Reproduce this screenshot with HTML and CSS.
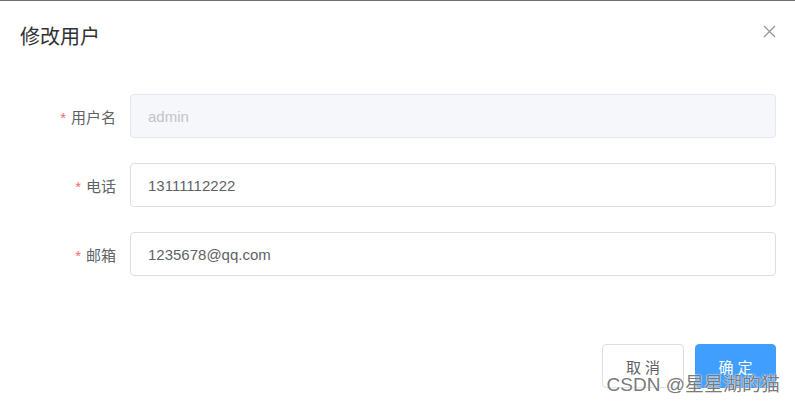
FILE: index.html
```html
<!DOCTYPE html>
<html lang="zh">
<head>
<meta charset="utf-8">
<link rel="stylesheet" href="styles.css">
</head>
<body>
<div class="dialog">
  <div class="header">
    <span class="title">修改用户</span>
    <button class="close" aria-label="close">
      <svg width="13" height="13" viewBox="0 0 13 13"><path d="M1 1L12 12M12 1L1 12" stroke="#909399" stroke-width="1.2" fill="none"/></svg>
    </button>
  </div>
  <div class="body">
    <div class="row">
      <label class="label"><span class="star">*</span>用户名</label>
      <div class="input disabled">admin</div>
    </div>
    <div class="row">
      <label class="label"><span class="star">*</span>电话</label>
      <div class="input">13111112222</div>
    </div>
    <div class="row">
      <label class="label"><span class="star">*</span>邮箱</label>
      <div class="input">1235678@qq.com</div>
    </div>
  </div>
  <div class="footer">
    <button class="btn">取 消</button>
    <button class="btn primary">确 定</button>
  </div>
  <div class="watermark">CSDN @星星湖的猫</div>
</div>
</body>
</html>
```
FILE: styles.css
```css
html, body {
  margin: 0;
  padding: 0;
  background: #fff;
}
body {
  font-family: "Liberation Sans", Arial, "Noto Sans CJK SC", sans-serif;
  width: 795px;
  height: 406px;
  overflow: hidden;
}
.dialog {
  position: relative;
  border-top: 1px solid #6f6f6f;
  height: 405px;
  box-sizing: border-box;
}
.header {
  display: flex;
  align-items: flex-start;
  justify-content: space-between;
  padding: 23px 19px 11px 20px;
}
.title {
  font-size: 20px;
  line-height: 26px;
  color: #303133;
}
.close {
  border: 0;
  background: none;
  padding: 0;
  margin-top: 1px;
  width: 13px;
  height: 13px;
  display: flex;
  cursor: pointer;
}
.body {
  padding: 33px 19px 0 20px;
}
.row {
  display: flex;
  align-items: center;
  height: 44px;
  margin-bottom: 25px;
}
.label {
  width: 110px;
  box-sizing: border-box;
  padding-right: 14px;
  text-align: right;
  font-size: 15px;
  color: #606266;
}
.star {
  color: #f56c6c;
  margin-right: 5px;
}
.input {
  flex: 1;
  height: 44px;
  box-sizing: border-box;
  border: 1px solid #dcdfe6;
  border-radius: 4px;
  padding: 0 17px;
  display: flex;
  align-items: center;
  font-size: 15px;
  color: #606266;
}
.input.disabled {
  background: #f5f7fa;
  border-color: #e4e7ed;
  color: #c0c4cc;
}
.footer {
  display: flex;
  justify-content: flex-end;
  gap: 11px;
  padding: 43px 19px 0 0;
}
.btn {
  width: 82px;
  height: 44px;
  border: 1px solid #dcdfe6;
  border-radius: 4px;
  background: #fff;
  color: #606266;
  font-family: inherit;
  font-size: 15px;
  padding: 0;
}
.btn.primary {
  width: 81px;
  background: #409eff;
  border-color: #409eff;
  color: #fff;
}
.watermark {
  position: absolute;
  right: 15px;
  bottom: 9px;
  white-space: nowrap;
  font-size: 19px;
  line-height: 22px;
  color: rgba(105, 105, 105, 0.9);
  text-shadow: 0 0 2px #fff, 0 0 1px #fff;
  pointer-events: none;
}
```
